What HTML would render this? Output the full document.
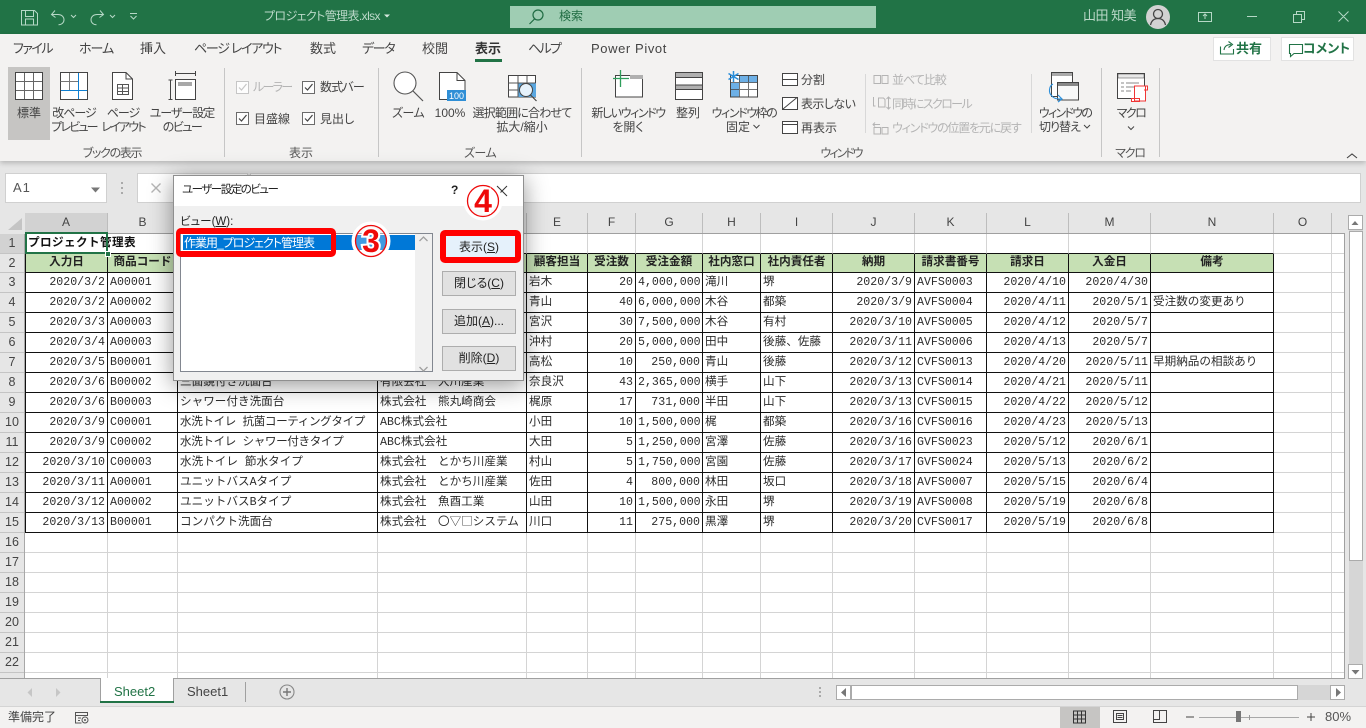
<!DOCTYPE html>
<html lang="ja"><head><meta charset="utf-8"><title>プロジェクト管理表</title>
<style>
html,body{margin:0;padding:0}
body{width:1366px;height:728px;overflow:hidden;position:relative;background:#e6e6e6;font-family:"Liberation Sans","Noto Sans CJK JP",sans-serif;font-size:12px;color:#444}
.a{position:absolute}
.t{position:absolute;white-space:nowrap;line-height:14px;font-feature-settings:"palt"}
.c{transform:translateX(-50%)}
#bar{left:0;top:0;width:1366px;height:34px;background:#217346}
#rib{left:0;top:34px;width:1366px;height:127px;background:#f3f2f1;box-shadow:0 2px 5px rgba(0,0,0,.22)}
.sep{position:absolute;width:1px;background:#c6c6c6}
.dis{color:#b4b4b4}
.tab{font-size:13px;top:42px}
.grp{top:146px;color:#555}
.wb{position:absolute;background:#fff;border:1px solid #d0d0d0;box-sizing:border-box}
#colh{left:25px;top:213px;height:21px;display:flex;width:1319px;overflow:hidden}
#colh div{box-sizing:border-box;height:20px;border-right:1px solid #bdbdbd;text-align:center;line-height:19px;font-size:12px;color:#444;flex:none}
#colline{left:25px;top:233px;width:1320px;height:1px;background:#a0a0a0}
#rowh{left:0;top:234px;width:25px;height:444px;overflow:hidden;border-right:1px solid #a8a8a8;box-sizing:border-box}
#rowh div{height:20px;box-sizing:border-box;border-bottom:1px solid #c4c4c4;text-align:center;line-height:19px;font-size:12.5px;color:#444}
#gridw{left:25px;top:234px;width:1320px;height:444px;overflow:hidden;background:#fff;border-right:1px solid #a0a0a0;box-sizing:border-box}
table{border-collapse:separate;border-spacing:0;table-layout:fixed;width:1319px;font-family:"Liberation Mono","Noto Sans CJK JP",monospace;font-size:11.6px;color:#2c2c2c}
td{box-sizing:border-box;height:20px;padding:1px 2px 0;border-right:1px solid #d4d4d4;border-bottom:1px solid #d4d4d4;white-space:nowrap;overflow:visible;line-height:18px}
td span{line-height:0}
tr.f td:nth-child(-n+14){border-bottom-color:#111}
tr.k td:nth-child(-n+14){border-right-color:#111;border-bottom-color:#111;overflow:hidden}
tr.k td:first-child{border-left:1px solid #111}
tr.h td{height:19px;padding-top:0;background:#c6e0b4;text-align:center;font-weight:bold;color:#222}
tr.h td:nth-child(n+15){background:#fff}
tr.k:not(.h) td:nth-child(1),tr.k:not(.h) td:nth-child(6),tr.k:not(.h) td:nth-child(7),tr.k:not(.h) td:nth-child(10),tr.k:not(.h) td:nth-child(12),tr.k:not(.h) td:nth-child(13){text-align:right}
#sel{left:25px;top:232px;width:83px;height:22px;border:2px solid #217346;box-sizing:border-box}
#handle{left:105px;top:251px;width:6px;height:6px;background:#217346;border:1px solid #fff;box-sizing:border-box}
#dlg{left:173px;top:175px;width:351px;height:206px;background:#f0f0f0;border:1px solid #8f8f8f;box-sizing:border-box;box-shadow:0 4px 22px rgba(0,0,0,.42)}
.btn{position:absolute;left:442px;width:74px;height:25px;box-sizing:border-box;background:#e1e1e1;border:1px solid #adadad;text-align:center;line-height:23px;color:#222;font-size:12px;font-feature-settings:"palt"}
u{text-underline-offset:1px}
</style></head><body>

<div class="a" id="bar"></div>
<div class="a" id="rib"></div>

<!-- title bar text -->
<div class="t" style="left:264px;top:9px;color:#bcd9c9;font-size:12px;letter-spacing:-.6px">プロジェクト管理表.xlsx</div>
<div class="a" style="left:510px;top:6px;width:366px;height:22px;background:#9fcdb3"></div>
<div class="t" style="left:559px;top:9px;color:#1f6b42;font-size:12px">検索</div>
<div class="t" style="left:1083px;top:9px;color:#bcd9c9;font-size:13px;letter-spacing:-.5px">山田 知美</div>

<!-- tabs -->
<div class="t tab" style="left:13px;letter-spacing:-1.500px">ファイル</div>
<div class="t tab" style="left:79px;letter-spacing:-1px">ホーム</div>
<div class="t tab" style="left:140px">挿入</div>
<div class="t tab" style="left:194px;letter-spacing:-1.300px">ページ レイアウト</div>
<div class="t tab" style="left:310px">数式</div>
<div class="t tab" style="left:362px;letter-spacing:-1.300px">データ</div>
<div class="t tab" style="left:422px">校閲</div>
<div class="t tab" style="left:475px;font-weight:bold;color:#333">表示</div>
<div class="a" style="left:475px;top:59px;width:27px;height:3px;background:#217346"></div>
<div class="t tab" style="left:528px;letter-spacing:-1.700px">ヘルプ</div>
<div class="t tab" style="left:591px;letter-spacing:.6px">Power Pivot</div>

<!-- share / comment -->
<div class="wb" style="left:1213px;top:37px;width:58px;height:24px;border-color:#e2e2e2"></div>
<div class="t" style="left:1236px;top:42px;font-size:13px;font-weight:bold;color:#217346">共有</div>
<div class="wb" style="left:1281px;top:37px;width:73px;height:24px;border-color:#e2e2e2"></div>
<div class="t" style="left:1303px;top:42px;font-size:13px;font-weight:bold;color:#217346">コメント</div>

<!-- ribbon: active button -->
<div class="a" style="left:8px;top:67px;width:42px;height:73px;background:#c6c5c3"></div>

<!-- separators -->
<div class="sep" style="left:224px;top:68px;height:89px"></div>
<div class="sep" style="left:378px;top:68px;height:89px"></div>
<div class="sep" style="left:581px;top:68px;height:89px"></div>
<div class="sep" style="left:1101px;top:68px;height:89px"></div>
<div class="sep" style="left:1159px;top:68px;height:89px"></div>
<div class="sep" style="left:865px;top:74px;height:59px;background:#d8d8d8"></div>
<div class="sep" style="left:1031px;top:74px;height:59px;background:#d8d8d8"></div>

<!-- ribbon labels -->
<div class="t c" style="left:29px;top:106px">標準</div>
<div class="t c" style="left:74px;top:106px;letter-spacing:-1px">改ページ</div>
<div class="t c" style="left:74px;top:120px;letter-spacing:-1.800px">プレビュー</div>
<div class="t c" style="left:123px;top:106px;letter-spacing:-1px">ページ</div>
<div class="t c" style="left:123px;top:120px;letter-spacing:-1.800px">レイアウト</div>
<div class="t c" style="left:182px;top:106px;letter-spacing:-1px">ユーザー設定</div>
<div class="t c" style="left:182px;top:120px;letter-spacing:-1.500px">のビュー</div>
<div class="t dis" style="left:253px;top:80px;letter-spacing:-1.700px">ルーラー</div>
<div class="t" style="left:320px;top:80px;letter-spacing:-.8px">数式バー</div>
<div class="t" style="left:254px;top:112px">目盛線</div>
<div class="t" style="left:320px;top:112px">見出し</div>
<div class="t c" style="left:408px;top:106px;letter-spacing:-.6px">ズーム</div>
<div class="t c" style="left:450px;top:106px">100%</div>
<div class="t c" style="left:522px;top:106px;letter-spacing:-.8px">選択範囲に合わせて</div>
<div class="t c" style="left:522px;top:120px">拡大/縮小</div>
<div class="t c" style="left:628px;top:106px;letter-spacing:-1.400px">新しいウィンドウ</div>
<div class="t c" style="left:628px;top:120px">を開く</div>
<div class="t c" style="left:688px;top:106px">整列</div>
<div class="t c" style="left:744px;top:106px;letter-spacing:-1.400px">ウィンドウ枠の</div>
<div class="t c" style="left:738px;top:120px">固定</div>
<div class="t" style="left:801px;top:73px">分割</div>
<div class="t" style="left:801px;top:97px;letter-spacing:-.6px">表示しない</div>
<div class="t" style="left:801px;top:121px">再表示</div>
<div class="t dis" style="left:892px;top:73px;letter-spacing:-1px">並べて比較</div>
<div class="t dis" style="left:892px;top:97px;letter-spacing:-1.600px">同時にスクロール</div>
<div class="t dis" style="left:892px;top:121px;letter-spacing:-1.200px">ウィンドウの位置を元に戻す</div>
<div class="t c" style="left:1065px;top:106px;letter-spacing:-1.700px">ウィンドウの</div>
<div class="t" style="left:1039px;top:120px;letter-spacing:-1px">切り替え</div>
<div class="t c" style="left:1131px;top:106px;letter-spacing:-1.500px">マクロ</div>
<div class="t c grp" style="left:112px;letter-spacing:-1.300px">ブックの表示</div>
<div class="t c grp" style="left:301px">表示</div>
<div class="t c grp" style="left:480px;letter-spacing:-.6px">ズーム</div>
<div class="t c grp" style="left:841px;letter-spacing:-2px">ウィンドウ</div>
<div class="t c grp" style="left:1130px;letter-spacing:-1.200px">マクロ</div>

<!-- formula bar -->
<div class="wb" style="left:5px;top:173px;width:102px;height:30px"></div>
<div class="t" style="left:13px;top:181px;font-size:13px;color:#555;letter-spacing:1px">A1</div>
<div class="wb" style="left:137px;top:173px;width:111px;height:30px"></div>
<div class="wb" style="left:250px;top:173px;width:1111px;height:30px"></div>

<!-- column header -->
<div class="a" id="colh">
<div style="width:83px;background:#d2d2d2">A</div><div style="width:70px">B</div><div style="width:200px">C</div><div style="width:149px">D</div><div style="width:61px">E</div><div style="width:48px">F</div><div style="width:67px">G</div><div style="width:58px">H</div><div style="width:72px">I</div><div style="width:82px">J</div><div style="width:72px">K</div><div style="width:82px">L</div><div style="width:82px">M</div><div style="width:123px">N</div><div style="width:58px">O</div><div style="width:13px"></div>
</div>
<div class="a" id="colline"></div>

<!-- row header -->
<div class="a" id="rowh">
<div style="background:#d2d2d2">1</div><div style="height:19px">2</div><div>3</div><div>4</div><div>5</div><div>6</div><div>7</div><div>8</div><div>9</div><div>10</div><div>11</div><div>12</div><div>13</div><div>14</div><div>15</div><div>16</div><div>17</div><div>18</div><div>19</div><div>20</div><div>21</div><div>22</div><div></div>
</div>

<!-- sheet -->
<div class="a" id="gridw">
<table>
<colgroup><col style="width:83px"><col style="width:70px"><col style="width:200px"><col style="width:149px"><col style="width:61px"><col style="width:48px"><col style="width:67px"><col style="width:58px"><col style="width:72px"><col style="width:82px"><col style="width:72px"><col style="width:82px"><col style="width:82px"><col style="width:123px"><col style="width:58px"><col style="width:13px"></colgroup>
<tr class="f"><td style="font-weight:bold;padding:0 2px 0 3px;color:#111;letter-spacing:.4px">プロジェクト管理表</td><td></td><td></td><td></td><td></td><td></td><td></td><td></td><td></td><td></td><td></td><td></td><td></td><td></td><td></td><td></td></tr>
<tr class="k h"><td>入力日</td><td>商品コード</td><td>商品名</td><td>取引先</td><td>顧客担当</td><td>受注数</td><td>受注金額</td><td>社内窓口</td><td>社内責任者</td><td>納期</td><td>請求書番号</td><td>請求日</td><td>入金日</td><td>備考</td><td></td><td></td></tr>
<tr class="k"><td>2020/3/2</td><td>A00001</td><td>システムキッチンAタイプ</td><td>株式会社　山川工業</td><td>岩木</td><td>20</td><td>4,000,000</td><td>滝川</td><td>堺</td><td>2020/3/9</td><td>AVFS0003</td><td>2020/4/10</td><td>2020/4/30</td><td></td><td></td><td></td></tr>
<tr class="k"><td>2020/3/2</td><td>A00002</td><td>システムキッチンBタイプ</td><td>株式会社　山川工業</td><td>青山</td><td>40</td><td>6,000,000</td><td>木谷</td><td>都築</td><td>2020/3/9</td><td>AVFS0004</td><td>2020/4/11</td><td>2020/5/1</td><td>受注数の変更あり</td><td></td><td></td></tr>
<tr class="k"><td>2020/3/3</td><td>A00003</td><td>システムキッチンCタイプ</td><td>株式会社　山川工業</td><td>宮沢</td><td>30</td><td>7,500,000</td><td>木谷</td><td>有村</td><td>2020/3/10</td><td>AVFS0005</td><td>2020/4/12</td><td>2020/5/7</td><td></td><td></td><td></td></tr>
<tr class="k"><td>2020/3/4</td><td>A00003</td><td>システムキッチンCタイプ</td><td>株式会社　山川工業</td><td>沖村</td><td>20</td><td>5,000,000</td><td>田中</td><td>後藤、佐藤</td><td>2020/3/11</td><td>AVFS0006</td><td>2020/4/13</td><td>2020/5/7</td><td></td><td></td><td></td></tr>
<tr class="k"><td>2020/3/5</td><td>B00001</td><td>コンパクト洗面台</td><td>有限会社　大川産業</td><td>高松</td><td>10</td><td>250,000</td><td>青山</td><td>後藤</td><td>2020/3/12</td><td>CVFS0013</td><td>2020/4/20</td><td>2020/5/11</td><td>早期納品の相談あり</td><td></td><td></td></tr>
<tr class="k"><td>2020/3/6</td><td>B00002</td><td>三面鏡付き洗面台</td><td>有限会社　大川産業</td><td>奈良沢</td><td>43</td><td>2,365,000</td><td>横手</td><td>山下</td><td>2020/3/13</td><td>CVFS0014</td><td>2020/4/21</td><td>2020/5/11</td><td></td><td></td><td></td></tr>
<tr class="k"><td>2020/3/6</td><td>B00003</td><td>シャワー付き洗面台</td><td>株式会社　熊丸崎商会</td><td>梶原</td><td>17</td><td>731,000</td><td>半田</td><td>山下</td><td>2020/3/13</td><td>CVFS0015</td><td>2020/4/22</td><td>2020/5/12</td><td></td><td></td><td></td></tr>
<tr class="k"><td>2020/3/9</td><td>C00001</td><td style="letter-spacing:-.4px">水洗トイレ 抗菌コーティングタイプ</td><td>ABC株式会社</td><td>小田</td><td>10</td><td>1,500,000</td><td>梶</td><td>都築</td><td>2020/3/16</td><td>CVFS0016</td><td>2020/4/23</td><td>2020/5/13</td><td></td><td></td><td></td></tr>
<tr class="k"><td>2020/3/9</td><td>C00002</td><td style="letter-spacing:-.4px">水洗トイレ シャワー付きタイプ</td><td>ABC株式会社</td><td>大田</td><td>5</td><td>1,250,000</td><td>宮澤</td><td>佐藤</td><td>2020/3/16</td><td>GVFS0023</td><td>2020/5/12</td><td>2020/6/1</td><td></td><td></td><td></td></tr>
<tr class="k"><td>2020/3/10</td><td>C00003</td><td>水洗トイレ 節水タイプ</td><td>株式会社　とかち川産業</td><td>村山</td><td>5</td><td>1,750,000</td><td>宮園</td><td>佐藤</td><td>2020/3/17</td><td>GVFS0024</td><td>2020/5/13</td><td>2020/6/2</td><td></td><td></td><td></td></tr>
<tr class="k"><td>2020/3/11</td><td>A00001</td><td>ユニットバスAタイプ</td><td>株式会社　とかち川産業</td><td>佐田</td><td>4</td><td>800,000</td><td>林田</td><td>坂口</td><td>2020/3/18</td><td>AVFS0007</td><td>2020/5/15</td><td>2020/6/4</td><td></td><td></td><td></td></tr>
<tr class="k"><td>2020/3/12</td><td>A00002</td><td>ユニットバスBタイプ</td><td>株式会社　魚酉工業</td><td>山田</td><td>10</td><td>1,500,000</td><td>永田</td><td>堺</td><td>2020/3/19</td><td>AVFS0008</td><td>2020/5/19</td><td>2020/6/8</td><td></td><td></td><td></td></tr>
<tr class="k"><td>2020/3/13</td><td>B00001</td><td>コンパクト洗面台</td><td>株式会社　〇▽<span style="font-family:'Noto Sans CJK JP',sans-serif">□</span>システム</td><td>川口</td><td>11</td><td>275,000</td><td>黒澤</td><td>堺</td><td>2020/3/20</td><td>CVFS0017</td><td>2020/5/19</td><td>2020/6/8</td><td></td><td></td><td></td></tr>
<tr><td></td><td></td><td></td><td></td><td></td><td></td><td></td><td></td><td></td><td></td><td></td><td></td><td></td><td></td><td></td><td></td></tr>
<tr><td></td><td></td><td></td><td></td><td></td><td></td><td></td><td></td><td></td><td></td><td></td><td></td><td></td><td></td><td></td><td></td></tr>
<tr><td></td><td></td><td></td><td></td><td></td><td></td><td></td><td></td><td></td><td></td><td></td><td></td><td></td><td></td><td></td><td></td></tr>
<tr><td></td><td></td><td></td><td></td><td></td><td></td><td></td><td></td><td></td><td></td><td></td><td></td><td></td><td></td><td></td><td></td></tr>
<tr><td></td><td></td><td></td><td></td><td></td><td></td><td></td><td></td><td></td><td></td><td></td><td></td><td></td><td></td><td></td><td></td></tr>
<tr><td></td><td></td><td></td><td></td><td></td><td></td><td></td><td></td><td></td><td></td><td></td><td></td><td></td><td></td><td></td><td></td></tr>
<tr><td></td><td></td><td></td><td></td><td></td><td></td><td></td><td></td><td></td><td></td><td></td><td></td><td></td><td></td><td></td><td></td></tr>
<tr><td></td><td></td><td></td><td></td><td></td><td></td><td></td><td></td><td></td><td></td><td></td><td></td><td></td><td></td><td></td><td></td></tr>
</table>
</div>
<div class="a" id="sel"></div>
<div class="a" id="handle"></div>

<!-- vertical scrollbar -->
<div class="a" style="left:1349px;top:215px;width:14px;height:463px;background:#d6d6d6"></div>
<div class="a" style="left:1349px;top:231px;width:14px;height:330px;background:#fff;border:1px solid #ababab;box-sizing:border-box"></div>
<div class="a" style="left:1348px;top:215px;width:15px;height:15px;background:#fff;border:1px solid #ababab;box-sizing:border-box"></div>
<div class="a" style="left:1348px;top:664px;width:15px;height:15px;background:#fff;border:1px solid #ababab;box-sizing:border-box"></div>

<!-- sheet tabs -->
<div class="a" style="left:0;top:678px;width:1345px;height:1px;background:#a0a0a0"></div>
<div class="a" style="left:100px;top:678px;width:74px;height:25px;background:#fff;border-left:1px solid #a0a0a0;border-right:1px solid #a0a0a0;box-sizing:border-box"></div>
<div class="a" style="left:100px;top:701px;width:74px;height:2px;background:#217346"></div>
<div class="t" style="left:114px;top:685px;font-size:13px;color:#217346">Sheet2</div>
<div class="t" style="left:187px;top:685px;font-size:13px;color:#444">Sheet1</div>
<div class="a" style="left:245px;top:682px;width:1px;height:20px;background:#a0a0a0"></div>

<!-- horizontal scrollbar -->
<div class="a" style="left:836px;top:685px;width:509px;height:15px;background:#d6d6d6"></div>
<div class="a" style="left:851px;top:685px;width:447px;height:15px;background:#fff;border:1px solid #ababab;box-sizing:border-box"></div>
<div class="a" style="left:836px;top:685px;width:15px;height:15px;background:#fff;border:1px solid #ababab;box-sizing:border-box"></div>
<div class="a" style="left:1330px;top:685px;width:15px;height:15px;background:#fff;border:1px solid #ababab;box-sizing:border-box"></div>

<!-- status bar -->
<div class="a" style="left:0;top:706px;width:1366px;height:22px;background:#f3f2f1;border-top:1px solid #d4d4d4;box-sizing:border-box"></div>
<div class="t" style="left:8px;top:710px;color:#444">準備完了</div>
<div class="a" style="left:1060px;top:707px;width:40px;height:21px;background:#c6c5c3"></div>
<div class="t" style="left:1325px;top:710px;font-size:13px;color:#555">80%</div>

<!-- all icons -->
<svg class="a" style="left:0;top:0" width="1366" height="728" viewBox="0 0 1366 728" fill="none">
<!-- title bar -->
<g stroke="#b6d8c6" stroke-width="1">
<path d="M21.5 10.5h13l3 3v11.500h-16zM25.500 10.500v6h8v-6M25.500 25v-6h8v6"/>
<path d="M55 10.500l-3.500 4 4 3M52 14.500h6c3.500 0 6 2.300 6 5.300s-2.500 5-5.500 5"/>
<path d="M71 15l2.500 2.500 2.500-2.500M110 15l2.500 2.500 2.500-2.500"/>
<path transform="translate(6 0)" d="M94 10.500l3.500 4-4 3M97 14.500h-6c-3.500 0-6 2.300-6 5.300s2.500 5 5.500 5"/>
<path d="M130 13.500h7M130.500 16l3 3 3-3"/>
<path d="M1198.500 12.500h13v9h-13zM1205 19v-5M1203 16l2-2 2 2"/>
<path d="M1247 16.500h10M1293.500 14.500h8v8h-8zM1296.500 14v-2.500h8v8h-3M1338.500 11.500l10 10M1348.500 11.500l-10 10"/>
</g>
<path d="M384 14.500h6l-3 3z" fill="#d8e8df"/>
<circle cx="1158" cy="17" r="12" fill="#d2d2d2"/>
<circle cx="1158" cy="14" r="4.500" stroke="#444" stroke-width="1.300"/>
<path d="M1150.500 25c1-4.500 3.500-6.500 7.500-6.500s6.500 2 7.500 6.500" stroke="#444" stroke-width="1.300"/>
<circle cx="538" cy="15" r="5" stroke="#1f6b42" stroke-width="1.200"/>
<path d="M534.500 19l-5 5" stroke="#1f6b42" stroke-width="1.200"/>
<!-- share/comment -->
<path d="M1220.500 46.500v7.500h13v-5M1224 50c.5-4 3-5.500 7-5.500M1228.500 41.500l4 3-4 3" stroke="#217346" stroke-width="1.100"/>
<path d="M1289.500 44.500h13v9h-8.500l-3.500 3v-3h-1z" stroke="#217346" stroke-width="1.100"/>
<!-- 標準 -->
<g stroke="#444" stroke-width="1">
<path d="M15.500 72.500h27v27h-27z" fill="#fff"/>
<path d="M24.500 73v26M33.500 73v26M16 81.500h26M16 90.500h26" stroke="#666"/>
<path d="M60.500 72.500h27v27h-27z" fill="#fff"/>
<path d="M69.500 73v17M60.500 81.500h18" stroke="#777"/>
<path d="M112.500 72.500h13.500l6.500 6.500v20.500h-20z" fill="#fff"/>
<path d="M126 72.500v6.500h6.500"/>
<path d="M117.500 84.500h11v10h-11zM117.500 88h11M117.500 91.500h11M122.500 84.500v10" stroke="#555"/>
<path d="M175.500 73.500h20M175.500 71v5M195.500 71v5M170.500 80v19M168.500 80h4M168.500 99.500h4"/>
<path d="M175.500 79.500h20v20h-20z" fill="#fff"/>
</g>
<path d="M78.500 73v26M61 90.500h26" stroke="#0f7fd1" stroke-width="1"/>
<rect x="178" y="82" width="14" height="4" fill="#a8a8a8"/>
<!-- checkboxes -->
<g stroke="#6b6b6b" fill="#fdfdfd">
<rect x="236.500" y="81.500" width="12" height="12" stroke="#c6c6c6"/>
<rect x="302.500" y="81.500" width="12" height="12"/>
<rect x="236.500" y="112.500" width="12" height="12"/>
<rect x="302.500" y="112.500" width="12" height="12"/>
</g>
<g stroke-width="1.200" fill="none">
<path d="M239 87.500l2.500 2.500 5-6" stroke="#c6c6c6"/>
<path d="M305 87.500l2.500 2.500 5-6" stroke="#444"/>
<path d="M239 118.500l2.500 2.500 5-6" stroke="#444"/>
<path d="M305 118.500l2.500 2.500 5-6" stroke="#444"/>
</g>
<!-- zoom -->
<circle cx="405" cy="83" r="11" stroke="#555" stroke-width="1.100" fill="#fff"/>
<path d="M413 91l10 10" stroke="#555" stroke-width="1.200"/>
<path d="M439.500 72.500h17.500l8 8v19h-25.500z" stroke="#444" fill="#fff"/>
<path d="M457 72.500v8h8" stroke="#444"/>
<rect x="447" y="90" width="19" height="11" fill="#2f8fd6"/>
<text x="456.500" y="99" text-anchor="middle" font-size="9" fill="#fff" font-family="Liberation Sans, sans-serif">100</text>
<path d="M508.500 75.500h27v21.500h-27z" stroke="#444" fill="#fff"/>
<path d="M518 83h18v14h-18z" fill="#5aa7e0"/>
<path d="M518 75.500v21.500M527 75.500v8M508.500 83h27M508.500 90h9" stroke="#555"/>
<circle cx="526" cy="90" r="6.500" stroke="#444" fill="#fff" fill-opacity=".85"/>
<path d="M530.500 95l6 6" stroke="#444" stroke-width="1.200"/>
<!-- new window -->
<path d="M615.500 75.500h27v21.500h-27z" stroke="#444" fill="#fff"/>
<rect x="630" y="75" width="13" height="4" fill="#b0b0b0"/>
<path d="M620.500 70v17M613 78.500h16" stroke="#2e9e5b" stroke-width="1.300"/>
<!-- arrange -->
<path d="M675.500 72.500h27v27h-27z" stroke="#444" fill="#fff"/>
<rect x="676" y="73" width="26" height="4" fill="#b0b0b0"/>
<rect x="676" y="85" width="26" height="4" fill="#b0b0b0"/>
<path d="M675.500 77.500h27M675.500 85h27M675.500 89.500h27" stroke="#444"/>
<!-- freeze -->
<path d="M730.500 75.500h27v21.500h-27z" stroke="#444" fill="#fff"/>
<path d="M739 76h18v6.500h-18zM731 83h8v13.500h-8z" fill="#6db0e6"/>
<path d="M739.500 75.500v21.500M748.500 75.500v21.500M730.500 82.500h27M730.500 89.500h27" stroke="#444" stroke-opacity=".75"/>
<path d="M733.500 71v11M728.500 73.500l10 6M738.500 73.500l-10 6" stroke="#2b8fdb" stroke-width="1.500"/>
<path d="M753.500 125l3 3 3-3" stroke="#444"/>
<!-- split etc -->
<g stroke="#444" fill="#fff">
<path d="M782.500 73.500h15v12h-15z"/><path d="M782.500 79.500h15"/>
<path d="M782.500 97.500h15v12h-15z"/><path d="M783 109l14-11.500"/>
<path d="M782.500 121.500h15v12h-15z"/><path d="M782.500 124.500h15"/>
</g>
<!-- disabled -->
<g stroke="#b4b4b4">
<path d="M874 75.500h6.500v8h-6.500zM882 75.500h6v8h-6z"/>
<path d="M873.500 97v9h2M878.500 98h5l1.500 1.500v7.500h-6.500z"/>
<path d="M888.500 97v12M886.500 99l2-2 2 2M886.500 107l2 2 2-2"/>
<path d="M874 127.500h6.500v6.500h-6.500zM882 127.500h6v6.500h-6zM873 124.500h7M875 122.500l-2 2 2 2"/>
</g>
<!-- switch windows -->
<path d="M1051.500 72.500h21v24h-21z" stroke="#444" fill="#fff"/>
<rect x="1052" y="73" width="20" height="3" fill="#aaa"/>
<path d="M1057.500 82.500h21v17.500h-21z" stroke="#444" fill="#f8f8f8"/>
<rect x="1058" y="83" width="20" height="3" fill="#888"/>
<path d="M1053 84c-4 2-5 9-1 12 2 3 6 3 9 3M1058 95l4 4-4 3" stroke="#2b8fdb" stroke-width="1.100"/>
<path d="M1084 125l3 3 3-3" stroke="#444"/>
<!-- macro -->
<path d="M1117.500 73.500h27v25h-27z" stroke="#444" fill="#fff"/>
<rect x="1118" y="74" width="26" height="4" fill="#e8e8e8" stroke="#444" stroke-width=".5"/>
<path d="M1121 83h3M1126 83h13M1121 87h3M1126 87h8M1121 91h3M1126 91h5" stroke="#888"/>
<path d="M1134.500 86h11v15h-11zM1131.500 98.500h8v3h-8zM1144 86h3.500v4h-3.500" stroke="#f03535" fill="#fff"/>
<path d="M1128 126.500l3 3 3-3" stroke="#444"/>
<path d="M1347 158l5-4 5 4" stroke="#444" stroke-width="1.100"/>
<!-- formula bar -->
<path d="M91 187.500h9l-4.500 5z" fill="#777"/>
<g fill="#aaa"><rect x="121" y="182" width="2" height="2"/><rect x="121" y="187" width="2" height="2"/><rect x="121" y="192" width="2" height="2"/></g>
<path d="M151.500 183.500l9 9M160.500 183.500l-9 9" stroke="#b5b5b5" stroke-width="1.400"/>
<path d="M8 230h14v-12z" fill="#c4c4c4"/>
<!-- scroll arrows -->
<path d="M1351.500 225h7l-3.500-4z" fill="#777"/>
<path d="M1351.500 670h8l-4 4.500z" fill="#777"/>
<path d="M1336 688l5 4.500-5 4.500z" fill="#777"/>
<path d="M846 688l-5 4.500 5 4.500z" fill="#777"/>
<path d="M32 688l-4.500 4.500 4.500 4.500z" fill="#c6c6c6"/>
<path d="M56 688l4.500 4.500-4.500 4.500z" fill="#c6c6c6"/>
<circle cx="287" cy="692" r="7" stroke="#888" stroke-width="1.100"/>
<path d="M287 688v8M283 692h8" stroke="#777" stroke-width="1.400"/>
<g fill="#aaa"><rect x="819" y="687" width="2" height="2"/><rect x="819" y="691" width="2" height="2"/><rect x="819" y="695" width="2" height="2"/></g>
<!-- status icons -->
<path d="M75.500 712.500h12v3h-12zM75.500 715.500v7.500h6M78 718h3M78 720.500h2" stroke="#555"/>
<circle cx="85" cy="720" r="3" stroke="#555"/><circle cx="85" cy="720" r="1" fill="#555"/>
<path d="M1073.500 711h12v12h-12zM1077.500 711v12M1081.500 711v12M1073.500 715h12M1073.500 719h12" stroke="#333"/>
<path d="M1113.500 710.500h13v12h-13zM1116.500 713.500h7v6h-7zM1117.500 715.500h5M1117.500 717.500h5" stroke="#444"/>
<path d="M1153.500 710.500h13v12h-13zM1153.500 719.500h6v-9" stroke="#444"/>
<path d="M1186 717h8M1307 717h8M1311 713v8" stroke="#444"/>
<path d="M1199 717.500h100" stroke="#a8a8a8"/>
<path d="M1249.500 715v5" stroke="#999"/>
<rect x="1236" y="711" width="5" height="11" fill="#777"/>
</svg>

<!-- dialog -->
<div class="a" id="dlg">
<div class="a" style="left:0;top:0;width:349px;height:30px;background:#fff"></div>
</div>
<div class="t" style="left:182px;top:183px;color:#222;font-size:11.500px;letter-spacing:-1.500px">ユーザー設定のビュー</div>
<div class="t" style="left:451px;top:183px;color:#222;font-weight:bold;font-size:12px">?</div>
<div class="t" style="left:180px;top:215px;color:#222;font-size:11.500px">ビュー(<u>W</u>):</div>
<div class="a" style="left:180px;top:233px;width:253px;height:139px;background:#fff;border:1px solid #828790;box-sizing:border-box"></div>
<div class="a" style="left:415px;top:234px;width:17px;height:137px;background:#f0f0f0"></div>
<div class="a" style="left:183px;top:235px;width:232px;height:15px;background:#0078d7"></div>
<div class="t" style="left:184px;top:236px;color:#fff;font-size:12px;letter-spacing:-1px">作業用_プロジェクト管理表</div>
<div class="a" style="left:176px;top:228px;width:160px;height:29px;border:6px solid #f00;border-left-width:4px;border-right-width:5px;border-radius:5px;box-sizing:border-box"></div>
<div class="btn" style="top:235px;background:#e5f1fb;border-color:#e5f1fb">表示(<u>S</u>)</div>
<div class="a" style="left:440px;top:230px;width:81px;height:33px;border:6px solid #f00;border-radius:5px;box-sizing:border-box"></div>
<div class="btn" style="top:271px">閉じる(<u>C</u>)</div>
<div class="btn" style="top:309px">追加(<u>A</u>)...</div>
<div class="btn" style="top:346px">削除(<u>D</u>)</div>

<svg class="a" style="left:0;top:0" width="1366" height="728" viewBox="0 0 1366 728" fill="none">
<path d="M497 186l10 10M507 186l-10 10" stroke="#333"/>
<path d="M419.500 240l4-4 4 4M419.500 366l4 4 4-4" stroke="#a0a0a0" stroke-width="1.300" transform="translate(0 1)"/>
<g font-family="Liberation Sans, sans-serif" font-weight="bold" text-anchor="middle" font-size="32">
<circle cx="371" cy="241" r="17.500" stroke="#fff" stroke-width="4" fill="#fff" fill-opacity=".25"/>
<circle cx="371" cy="241" r="15.500" stroke="#ee0a0a" stroke-width="1.300"/>
<text x="371" y="252" fill="#ee0a0a" stroke="#fff" stroke-width="4" paint-order="stroke">3</text>
<circle cx="483" cy="201" r="17.500" stroke="#fff" stroke-width="4" fill="#fff" fill-opacity=".55"/>
<circle cx="483" cy="201" r="15.500" stroke="#ee0a0a" stroke-width="1.300"/>
<text x="483" y="212" fill="#ee0a0a" stroke="#fff" stroke-width="4" paint-order="stroke">4</text>
</g>
</svg>
</body></html>
